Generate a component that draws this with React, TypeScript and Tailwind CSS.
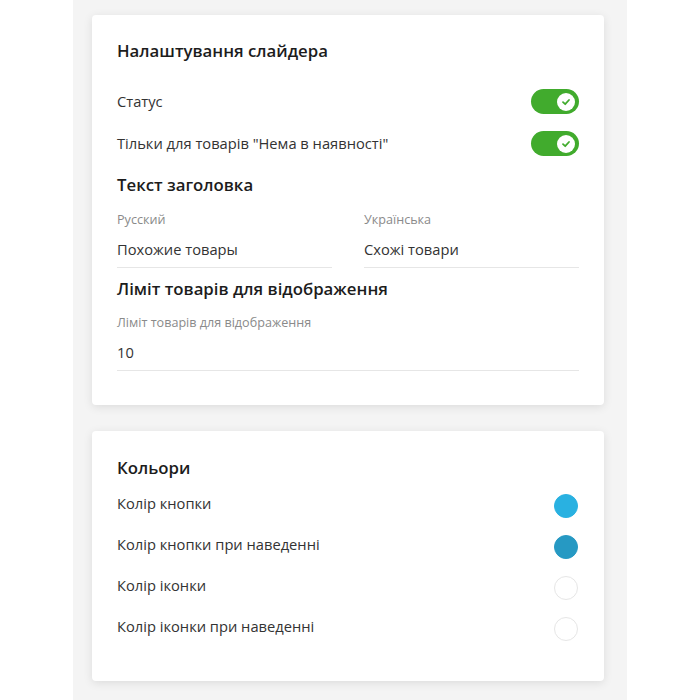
import React from 'react';

const font = { fontFamily: '"Open Sans", "Noto Sans", sans-serif' };

// перемикач з галочкою
const Toggle: React.FC = () => (
  <div className="relative h-[25px] w-[48px] rounded-full bg-[#41ab2d]">
    <div className="absolute right-[4px] top-[3.5px] flex h-[18px] w-[18px] items-center justify-center rounded-full bg-white">
      <svg width="10" height="10" viewBox="0 0 10 10" fill="none">
        <path d="M2 5.2 L4.2 7.2 L8 3" stroke="#41ab2d" strokeWidth="1.8" strokeLinecap="round" strokeLinejoin="round" />
      </svg>
    </div>
  </div>
);

const Field: React.FC<{ label: string; value: string }> = ({ label, value }) => (
  <div className="flex-1">
    <div className="text-[12.6px] leading-[16px] text-[#8a8a8a]">{label}</div>
    <div className="mt-[11px] border-b border-[#e6e6e6] pb-[8px] text-[14.7px] leading-[20px] text-[#333]">{value}</div>
  </div>
);

const colors = [
  { label: 'Колір кнопки', color: '#29b1e1' },
  { label: 'Колір кнопки при наведенні', color: '#2699c3' },
  { label: 'Колір іконки', color: '#ffffff' },
  { label: 'Колір іконки при наведенні', color: '#ffffff' },
];

export default function App() {
  return (
    <div className="flex min-h-[700px] justify-center bg-white" style={font}>
      <div className="w-[554px] bg-[#f4f4f4] pl-[19px] pt-[15px] pb-[19px]">
        {/* Налаштування слайдера */}
        <div className="w-[512px] rounded-[4px] bg-white px-[25px] pt-[25px] pb-[34px] shadow-[0_2px_10px_rgba(0,0,0,0.1)]">
          <h2 className="text-[16.8px] font-semibold leading-[22px] text-[#1c1c1c]">Налаштування слайдера</h2>
          <div className="mt-[27px] flex items-center justify-between">
            <span className="text-[14.7px] text-[#333]">Статус</span>
            <Toggle />
          </div>
          <div className="mt-[17px] flex items-center justify-between">
            <span className="text-[14.7px] text-[#333]">Тільки для товарів "Нема в наявності"</span>
            <Toggle />
          </div>
          <h2 className="mt-[18px] text-[16.8px] font-semibold leading-[22px] text-[#1c1c1c]">Текст заголовка</h2>
          <div className="mt-[16px] flex gap-[32px]">
            <Field label="Русский" value="Похожие товары" />
            <Field label="Українська" value="Схожі товари" />
          </div>
          <h2 className="mt-[10px] text-[16.8px] font-semibold leading-[22px] text-[#1c1c1c]">Ліміт товарів для відображення</h2>
          <div className="mt-[15px] flex">
            <Field label="Ліміт товарів для відображення" value="10" />
          </div>
        </div>

        {/* Кольори */}
        <div className="mt-[26px] w-[512px] rounded-[4px] bg-white px-[25px] pt-[26px] pb-[40px] shadow-[0_2px_10px_rgba(0,0,0,0.1)]">
          <h2 className="text-[16.8px] font-semibold leading-[22px] text-[#1c1c1c]">Кольори</h2>
          <div className="mt-[15px] flex flex-col gap-[17px]">
            {colors.map((c) => (
              <div key={c.label} className="flex items-start justify-between">
                <span className="text-[14.7px] leading-[18px] text-[#333]">{c.label}</span>
                <span
                  className="mr-[1px] h-[24px] w-[24px] rounded-full border"
                  style={{ backgroundColor: c.color, borderColor: c.color === '#ffffff' ? '#e6e6e6' : c.color }}
                />
              </div>
            ))}
          </div>
        </div>
      </div>
    </div>
  );
}
